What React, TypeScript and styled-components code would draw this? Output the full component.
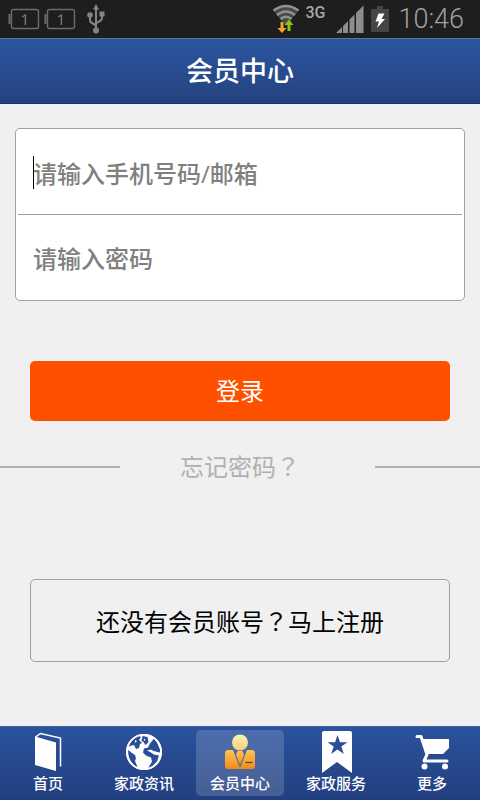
import React from "react";
import styled, { createGlobalStyle, css } from "styled-components";

const GlobalStyle = createGlobalStyle`
  *, *::before, *::after { box-sizing: border-box; }
  body {
    margin: 0;
    background: #f0f0f0;
    font-family: Roboto, "Noto Sans CJK SC", sans-serif;
  }
`;

const Page = styled.div`
  display: flex;
  flex-direction: column;
  min-height: 100vh;
`;

const StatusBar = styled.div`
  display: flex;
  align-items: center;
  justify-content: space-between;
  height: 38px;
  padding: 0 16px 0 8px;
  background: #1e1e1e;
  color: #8e8e8e;
`;

const StatusGroup = styled.div<{ $gap?: number }>`
  display: flex;
  align-items: center;
  gap: ${(p) => p.$gap ?? 0}px;
`;

const Network = styled.span`
  align-self: flex-start;
  margin: 5px 10px 0 5px;
  font-size: 16px;
  line-height: 16px;
  font-weight: 500;
  color: #a8a8a8;
`;

const Clock = styled.time`
  margin-left: 8px;
  font-size: 27px;
  line-height: 38px;
  font-weight: 300;
  color: #a0a0a0;
`;

const Header = styled.header`
  display: flex;
  align-items: center;
  justify-content: center;
  height: 66px;
  padding-top: 2px;
  border-top: 1px solid #5474ae;
  border-bottom: 1px solid #1b2d78;
  background: linear-gradient(#2c559f, #24427f);
`;

const Title = styled.h1`
  margin: 0;
  font-size: 27px;
  line-height: 32px;
  font-weight: 500;
  color: #fff;
`;

const Main = styled.main`
  display: flex;
  flex: 1;
  flex-direction: column;
  padding: 24px 0;
`;

const Card = styled.div`
  margin: 0 15px;
  border: 1px solid #a0a0a0;
  border-radius: 5px;
  background: #fff;
`;

const Field = styled.label<{ $active?: boolean }>`
  position: relative;
  display: flex;
  align-items: center;
  height: 85px;
  padding: 2px 17px 0;
  ${(p) =>
    p.$active &&
    css`
      padding-top: 5px;
      &::before {
        content: "";
        position: absolute;
        left: 17px;
        top: 27px;
        width: 1px;
        height: 33px;
        background: #000;
      }
    `}
`;

const Divider = styled.hr`
  height: 1px;
  margin: 0 2px;
  border: 0;
  background: #a0a0a0;
`;

const TextInput = styled.input`
  width: 100%;
  padding: 0;
  border: 0;
  outline: 0;
  background: transparent;
  font: 500 24px/36px "Open Sans", "Noto Sans CJK SC", sans-serif;
  color: #222;
  &::placeholder {
    color: #808080;
    opacity: 1;
  }
`;

const Button = styled.button<{ $kind: "primary" | "outline" }>`
  margin: 0 30px;
  padding: 2px 0 0;
  border-radius: 5px;
  font: 400 24px/36px Roboto, "Noto Sans CJK SC", sans-serif;
  ${(p) =>
    p.$kind === "primary"
      ? css`
          height: 60px;
          margin-top: 60px;
          border: 0;
          background: #ff5000;
          color: #fff;
        `
      : css`
          height: 83px;
          margin-top: 95px;
          border: 1px solid #a0a0a0;
          background: transparent;
          color: #000;
        `}
`;

const Forgot = styled.div`
  display: grid;
  grid-template-columns: 1fr auto 1fr;
  align-items: center;
  height: 36px;
  margin-top: 27px;
`;

const Rule = styled.span<{ $end?: boolean }>`
  width: ${(p) => (p.$end ? "105px" : "120px")};
  height: 2px;
  justify-self: ${(p) => (p.$end ? "end" : "start")};
  background: #b0b0b0;
`;

const ForgotLink = styled.a`
  font-size: 24px;
  line-height: 36px;
  color: #b0b0b0;
  text-decoration: none;
`;

const Mark = styled.span`
  font-family: "Noto Sans CJK TC", sans-serif;
`;

const TabBar = styled.nav`
  display: grid;
  grid-template-columns: repeat(5, 1fr);
  height: 74px;
  padding: 3px 0 4px;
  border-top: 1px solid #3a5c9c;
  background: linear-gradient(#2b539e, #223f80);
`;

const Tab = styled.a<{ $active?: boolean }>`
  display: flex;
  flex-direction: column;
  align-items: center;
  margin: 0 4px;
  border-radius: 5px;
  background: ${(p) => (p.$active ? "rgba(255, 255, 255, 0.16)" : "transparent")};
  font-size: 15px;
  line-height: 20px;
  font-weight: 500;
  color: #fff;
  text-decoration: none;
  svg {
    display: block;
  }
`;

const CellBattery = () => (
  <svg width="36" height="24" viewBox="0 0 36 24" fill="none" stroke="#6c6c6c" strokeWidth="1.4">
    <rect x="3.5" y="2.5" width="27" height="19" rx="2" />
    <path d="M1.5 7v10" strokeWidth="2" />
    <path d="M14.2 10l3.2-2v10" stroke="#777" />
  </svg>
);

const Usb = () => (
  <svg width="32" height="32" viewBox="-6 0 32 32" fill="#858585" stroke="#858585">
    <path d="M10 6v20M10 24c0-4-6-2.500-6-7v-5M10 21c0-3 6-1.500 6-6v-4" fill="none" strokeWidth="2" />
    <path d="M10 1l3 5.500H7z" stroke="none" />
    <circle cx="4" cy="12" r="2.800" stroke="none" />
    <path d="M13.500 8.500h5v5h-5z" stroke="none" />
    <circle cx="10" cy="27.500" r="3" stroke="none" />
  </svg>
);

const Wifi = () => (
  <svg width="28" height="30" viewBox="0 0 28 30">
    <path d="M1 6Q14-3.500 27 6L14 22z" fill="#4a4a4a" />
    <g fill="none" stroke="#929292" strokeWidth="2.600">
      <path d="M1.500 6.500Q14-2.500 26.500 6.500" />
      <path d="M5 11Q14 4 23 11" />
      <path d="M8.500 15Q14 10.500 19.500 15" />
    </g>
    <path d="M8.500 18h3v6h3L10 29 5.500 24h3z" fill="#f7a234" />
    <path d="M15.500 27h3v-6h3L17 15.500 12.500 21h3z" fill="#86c70a" />
  </svg>
);

const Signal = () => (
  <svg width="30" height="30" viewBox="0 0 30 30" fill="#8e8e8e">
    <path d="M1 29l6-6v6zM8 22l5-5v12H8zM14.500 15.500l5-5V29h-5zM21 9l7.500-7.500V29H21z" />
  </svg>
);

const Charging = () => (
  <svg width="20" height="28" viewBox="0 0 20 28">
    <path d="M7 1h6v3h6v23H1V4h6z" fill="#454545" />
    <path d="M8.500 8.500h6L11.500 14h3.500l-8 9 2-6.500H5.500z" fill="#fff" />
  </svg>
);

const Book = () => (
  <svg width="40" height="44" viewBox="0 0 40 44">
    <path d="M7 6.500l21 6V41L7 35z" fill="#fff" />
    <path d="M7.500 7l5-3.500L32.500 8v28.500" fill="none" stroke="#fff" strokeWidth="1.500" />
  </svg>
);

const Globe = () => (
  <svg width="40" height="44" viewBox="0 0 40 44">
    <circle cx="20" cy="22" r="18" fill="#fff" />
    <g fill="#294f98">
      <path d="M4.500 17C6 11.500 10 7.500 15 6l2 1-2 3 3 3-2 1-1 4-3 1-2-4-4 1z" />
      <path d="M18.500 6l5 1 1 5-3 3-2-3-2-1z" />
      <path d="M30 8.500l3 4 3 7v3l-6-1-3-2-4 1 4 2 3 2 5 1-2 6-5 5-4 2 4-7-1-4-5-2-3-3 1-4 4-1 2-4z" />
      <path d="M4 20l4 3 3 2 1 3-1 3 3 7C8 35 4 29 4 20z" />
    </g>
    <path d="M28 20.500l5 1.500-1 1.500-5-1zM19.500 8.500l2 1-1 1.500zM11 10l2 1-2 2z" fill="#fff" />
    <circle cx="20" cy="22" r="17.200" fill="none" stroke="#fff" strokeWidth="1.600" />
  </svg>
);

const Member = () => (
  <svg width="40" height="44" viewBox="0 0 40 44">
    <defs>
      <linearGradient id="head" x2="0" y2="1">
        <stop stopColor="#fff0bd" />
        <stop offset="1" stopColor="#f8cd70" />
      </linearGradient>
      <linearGradient id="suit" x2="0" y2="1">
        <stop stopColor="#ffc552" />
        <stop offset="1" stopColor="#ee8c1a" />
      </linearGradient>
    </defs>
    <circle cx="20" cy="12.500" r="8" fill="url(#head)" />
    <path d="M8 20h5l7 18 7-18h5q3 0 3 4v12q0 3-3 3H8q-3 0-3-3V24q0-4 3-4z" fill="url(#suit)" />
    <path d="M17.500 21h5l1.500 4-4 10-4-10z" fill="url(#suit)" />
    <path d="M25.500 32.500h7" stroke="#70401c" strokeWidth="1.300" />
  </svg>
);

const Bookmark = () => (
  <svg width="40" height="44" viewBox="0 0 40 44">
    <path d="M8 1h26q2 0 2 2v40L21 32 6 43V3q0-2 2-2z" fill="#fff" />
    <path d="M21.500 5l2.400 7.200h7.600l-6.200 4.400 2.500 7.400-6.300-4.600-6.300 4.600 2.500-7.400-6.200-4.400h7.600z" fill="#294e96" />
  </svg>
);

const Cart = () => (
  <svg width="40" height="44" viewBox="0 0 40 44">
    <path d="M5 6.500h4l6 18-3 6.500h23" fill="none" stroke="#fff" strokeWidth="3" strokeLinecap="round" strokeLinejoin="round" />
    <path d="M9 9h28v9l-6 6H14z" fill="#fff" />
    <circle cx="12.500" cy="36.500" r="3" fill="#fff" />
    <circle cx="33" cy="36.500" r="3" fill="#fff" />
  </svg>
);

const tabs = [
  { label: "首页", Icon: Book },
  { label: "家政资讯", Icon: Globe },
  { label: "会员中心", Icon: Member, active: true },
  { label: "家政服务", Icon: Bookmark },
  { label: "更多", Icon: Cart },
];

export default function App() {
  return (
    <Page>
      <GlobalStyle />
      <StatusBar>
        <StatusGroup>
          <CellBattery />
          <CellBattery />
          <Usb />
        </StatusGroup>
        <StatusGroup>
          <Wifi />
          <Network>3G</Network>
          <StatusGroup $gap={5}>
            <Signal />
            <Charging />
          </StatusGroup>
          <Clock>10:46</Clock>
        </StatusGroup>
      </StatusBar>
      <Header>
        <Title>会员中心</Title>
      </Header>
      <Main>
        <Card>
          <Field $active>
            <TextInput type="text" aria-label="手机号码/邮箱" placeholder="请输入手机号码/邮箱" />
          </Field>
          <Divider />
          <Field>
            <TextInput type="password" aria-label="密码" placeholder="请输入密码" />
          </Field>
        </Card>
        <Button type="button" $kind="primary">登录</Button>
        <Forgot>
          <Rule />
          <ForgotLink href="#forgot">忘记密码<Mark>？</Mark></ForgotLink>
          <Rule $end />
        </Forgot>
        <Button type="button" $kind="outline">还没有会员账号<Mark>？</Mark>马上注册</Button>
      </Main>
      <TabBar>
        {tabs.map(({ label, Icon, active }) => (
          <Tab key={label} href={`#${label}`} $active={active} aria-current={active ? "page" : undefined}>
            <Icon />
            {label}
          </Tab>
        ))}
      </TabBar>
    </Page>
  );
}
